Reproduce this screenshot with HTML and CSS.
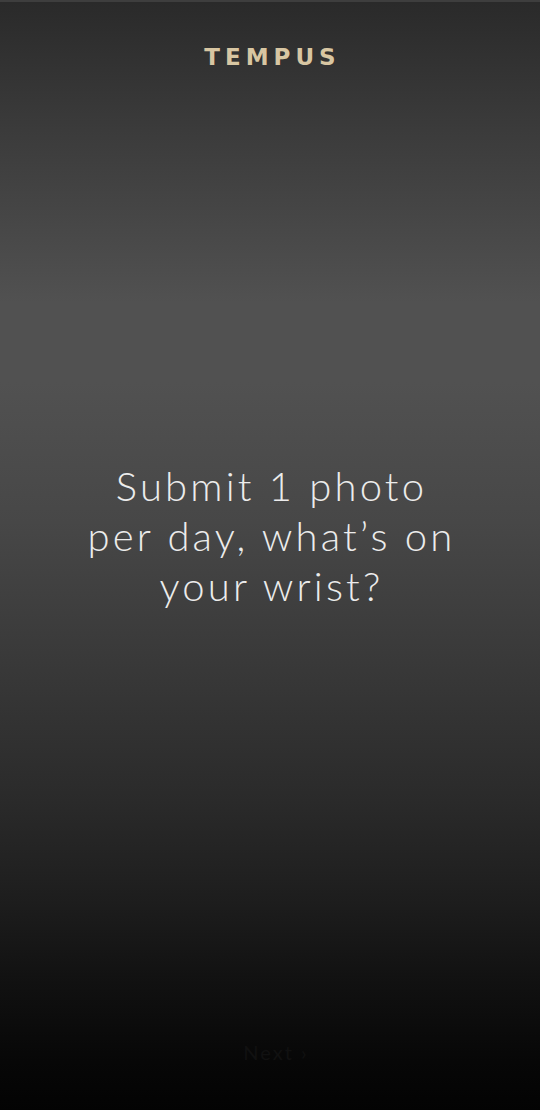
FILE: index.html
```html
<!DOCTYPE html>
<html>
<head>
<meta charset="utf-8">
<link rel="stylesheet" href="styles.css">
</head>
<body>
<div class="screen">
  <header class="brand">TEMPUS</header>
  <main class="hero">
    <h1 class="headline">Submit 1 photo<br>per day, what’s on<br>your wrist?</h1>
  </main>
  <footer class="footer">
    <span class="next">Next ›</span>
  </footer>
</div>
</body>
</html>
```
FILE: styles.css
```css
html, body {
  margin: 0;
  padding: 0;
  background: #050505;
}
.screen {
  width: 540px;
  height: 1110px;
  display: flex;
  flex-direction: column;
  align-items: center;
  box-sizing: border-box;
  border-top: 2px solid #3e3e3e;
  background: linear-gradient(180deg,
    #2a2a2a 0px,
    #3a3a3a 120px,
    #515151 300px,
    #515151 380px,
    #474747 520px,
    #3a3a3a 650px,
    #2a2a2a 800px,
    #1d1d1d 900px,
    #111111 980px,
    #070707 1060px,
    #030303 1110px);
  font-family: Lato, "Open Sans", sans-serif;
}
.brand {
  margin-top: 41px;
  padding-left: 5px;
  font-family: "DejaVu Sans", "Open Sans", sans-serif;
  font-weight: 700;
  font-size: 23px;
  letter-spacing: 5px;
  color: #d8c6a2;
  line-height: 28px;
}
.hero {
  flex: 1;
  display: flex;
  align-items: flex-start;
  justify-content: center;
  padding-top: 390px;
}
.headline {
  margin: 0;
  text-align: center;
  font-weight: 300;
  font-size: 40px;
  line-height: 50px;
  color: #ececec;
  letter-spacing: 3.2px;
  padding-left: 3px;
}
.footer {
  height: 70px;
  display: flex;
  justify-content: center;
}
.next {
  font-size: 20px;
  color: #111111;
  margin-left: 12px;
  letter-spacing: 2px;
}
```
